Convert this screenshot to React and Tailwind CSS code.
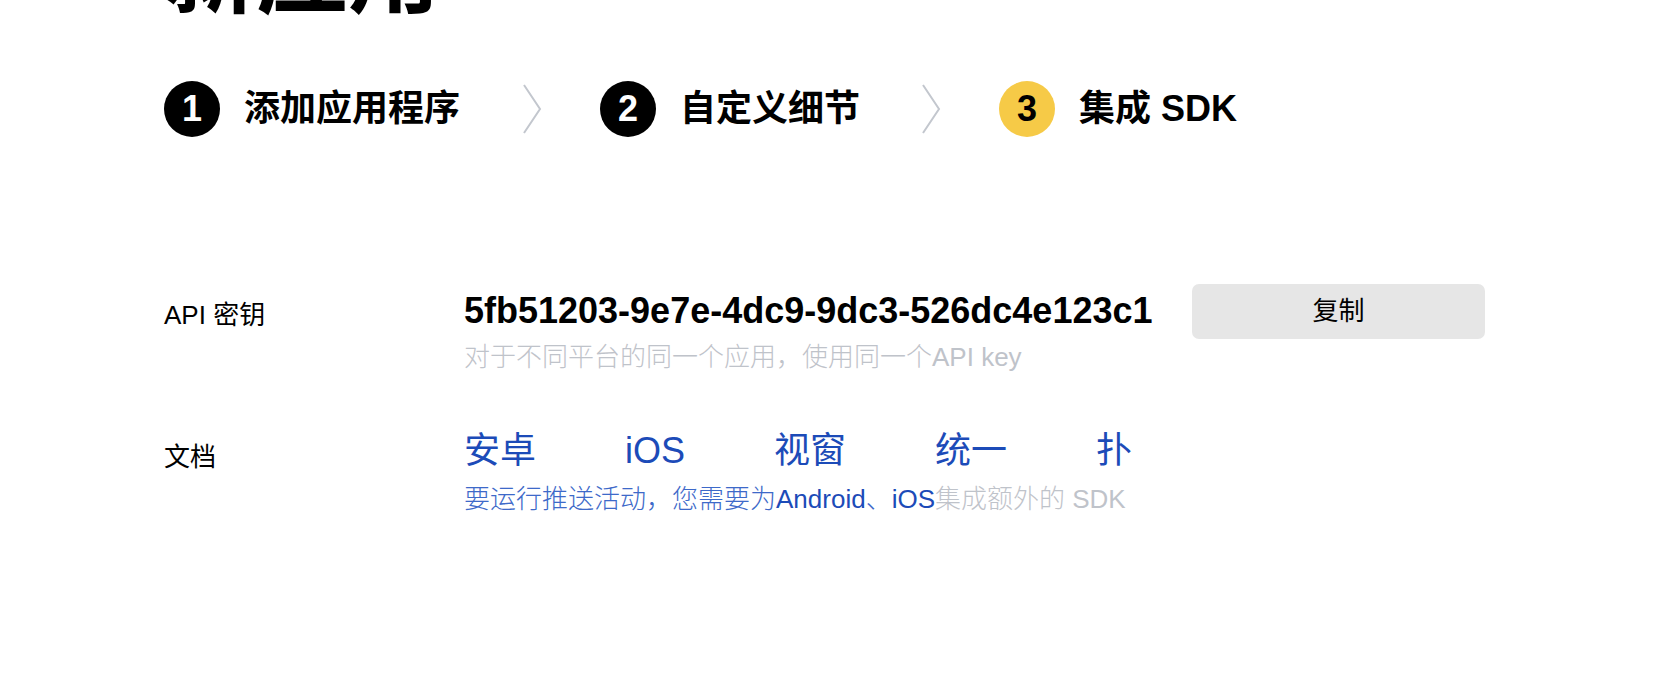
import React from "react";

function Chevron({ ml }) {
  return (
    <svg width="20" height="50" viewBox="0 0 20 50" className={ml + " mr-[58px] shrink-0"}>
      <polyline points="2,1 18,25 2,49" fill="none" stroke="#c3c7ce" strokeWidth="2" />
    </svg>
  );
}

function Step({ n, label, active }) {
  return (
    <div className="flex items-center gap-6">
      <div
        className={
          active
            ? "w-14 h-14 rounded-full bg-[#f6ca47] text-black flex items-center justify-center text-[36px] font-bold leading-none"
            : "w-14 h-14 rounded-full bg-black text-white flex items-center justify-center text-[36px] font-bold leading-none"
        }
      >
        {n}
      </div>
      <div className="text-[36px] font-bold leading-none text-black whitespace-nowrap">{label}</div>
    </div>
  );
}

export default function App() {
  return (
    <div className="w-[1680px] h-[678px] overflow-hidden bg-white font-['Liberation_Sans','Noto_Sans_CJK_SC',sans-serif] text-black">
      <div className="pl-[164px] flex flex-col">
        <div className="-mt-[72px] h-[92px] text-[92px] font-bold leading-none whitespace-nowrap">新应用</div>

        <div className="mt-[61px] h-14 flex items-center">
          <Step n="1" label="添加应用程序" />
          <Chevron ml="ml-[62px]" />
          <Step n="2" label="自定义细节" />
          <Chevron ml="ml-[61px]" />
          <Step n="3" label="集成 SDK" active />
        </div>

        <div className="mt-[147px] flex items-start">
          <div className="w-[300px] pt-[13px] text-[26px] leading-[36px]">API 密钥</div>
          <div className="w-[728px] pt-[5px] flex flex-col">
            <div className="text-[36px] font-bold leading-[44px] whitespace-nowrap">5fb51203-9e7e-4dc9-9dc3-526dc4e123c1</div>
            <div className="mt-[6px] text-[26px] leading-[36px] font-light text-[#bfc3ca] whitespace-nowrap">对于不同平台的同一个应用，使用同一个API key</div>
          </div>
          <button className="w-[293px] h-[55px] rounded-[7px] bg-[#e6e6e6] text-[26px] text-black flex items-center justify-center">复制</button>
        </div>

        <div className="mt-[54px] flex items-start">
          <div className="w-[300px] pt-[10px] text-[26px] leading-[36px]">文档</div>
          <div className="flex flex-col">
            <div className="flex gap-[89px] text-[36px] leading-[44px] text-[#1c4bb8] whitespace-nowrap">
              <span>安卓</span>
              <span>iOS</span>
              <span>视窗</span>
              <span>统一</span>
              <span>扑</span>
            </div>
            <div className="mt-[8px] text-[26px] leading-[36px] font-light whitespace-nowrap">
              <span className="text-[#3d69c9]">要运行推送活动，您需要为</span>
              <span className="text-[#1c4bb8]">Android</span>
              <span className="text-[#3d69c9]">、</span>
              <span className="text-[#1c4bb8]">iOS</span>
              <span className="text-[#bfc3ca]">集成额外的 SDK</span>
            </div>
          </div>
        </div>
      </div>
    </div>
  );
}
